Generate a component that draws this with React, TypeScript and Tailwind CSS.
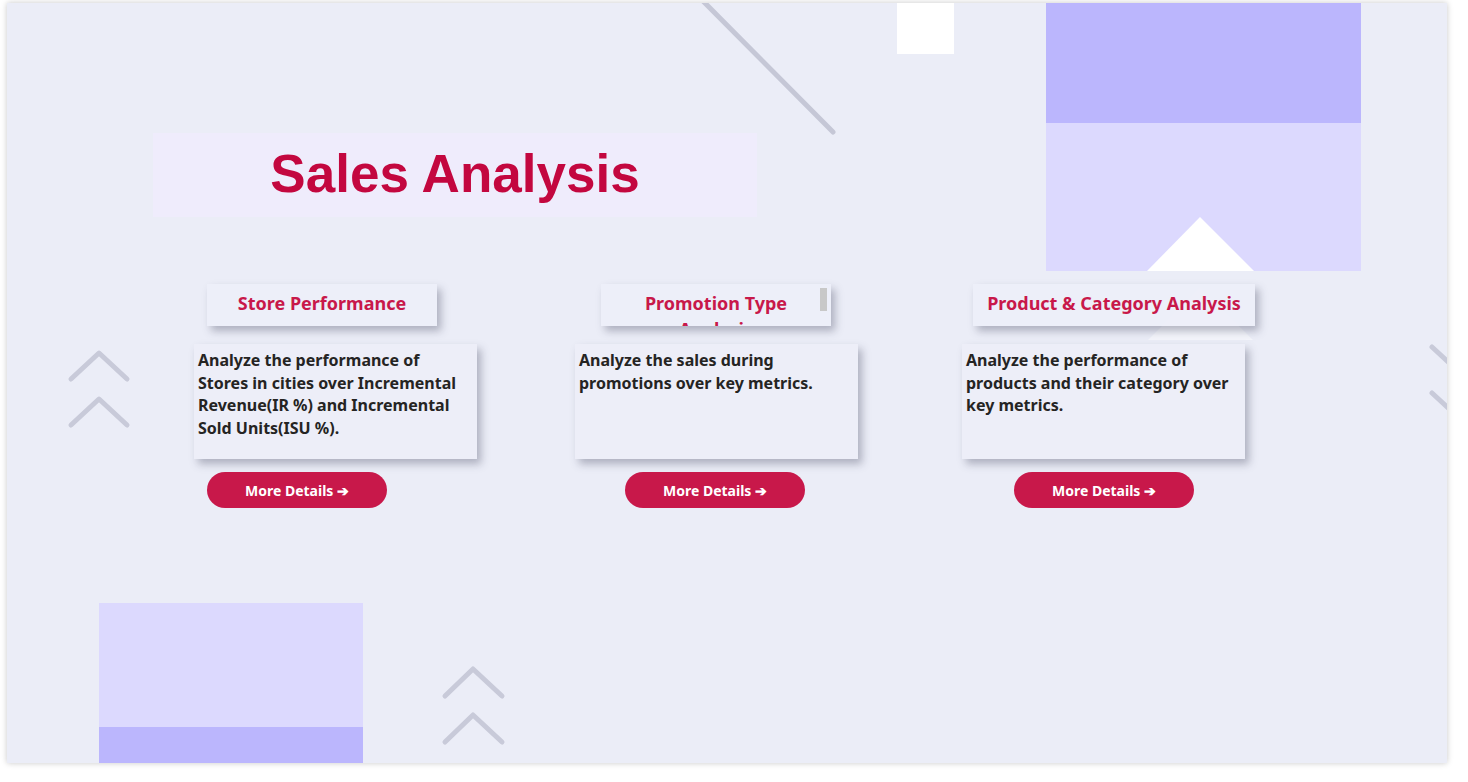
import React from "react";

const cards = [
  {
    title: "Store Performance",
    desc: "Analyze the performance of Stores in cities over Incremental Revenue(IR %) and Incremental Sold Units(ISU %).",
    colMl: "ml-[187px]",
    titleCls: "ml-[13px] w-[230px]",
    btnCls: "ml-[13px]",
    scroll: false,
  },
  {
    title: "Promotion Type Analysis",
    desc: "Analyze the sales during promotions over key metrics.",
    colMl: "ml-[98px]",
    titleCls: "ml-[26px] w-[230px]",
    btnCls: "ml-[50px]",
    scroll: true,
  },
  {
    title: "Product & Category Analysis",
    desc: "Analyze the performance of products and their category over key metrics.",
    colMl: "ml-[104px]",
    titleCls: "ml-[11px] w-[282px]",
    btnCls: "ml-[52px]",
    scroll: false,
  },
];

function Decorations() {
  const stroke = "#C8CAD9";
  return (
    <svg
      className="absolute inset-0 pointer-events-none"
      width={1440}
      height={760}
      viewBox="0 0 1440 760"
    >
      {/* purple block top right */}
      <rect x={1039} y={0} width={315} height={120} fill="#BBB6FD" />
      <rect x={1039} y={120} width={315} height={148} fill="#DCD9FE" />
      <polygon points="1193,214 1140,268 1247,268" fill="#FFFFFF" />
      <polygon points="1193,285 1141,337 1246,337" fill="#FFFFFF" fillOpacity={0.45} />
      {/* white square */}
      <rect x={890} y={0} width={57} height={51} fill="#FFFFFF" />
      {/* bottom left block */}
      <rect x={92} y={600} width={264} height={124} fill="#DCD9FE" />
      <rect x={92} y={724} width={264} height={36} fill="#BBB6FD" />
      {/* diagonal line */}
      <line x1={692} y1={-6} x2={826} y2={129} stroke="#C5C7D6" strokeWidth={5} strokeLinecap="round" />
      {/* chevrons left */}
      <polyline points="64,376 92,350 120,376" fill="none" stroke={stroke} strokeWidth={5} strokeLinecap="round" strokeLinejoin="round" />
      <polyline points="64,422 92,396 120,422" fill="none" stroke={stroke} strokeWidth={5} strokeLinecap="round" strokeLinejoin="round" />
      {/* chevrons bottom */}
      <polyline points="438,693 466,666 495,693" fill="none" stroke={stroke} strokeWidth={5} strokeLinecap="round" strokeLinejoin="round" />
      <polyline points="438,739 466,712 495,739" fill="none" stroke={stroke} strokeWidth={5} strokeLinecap="round" strokeLinejoin="round" />
      {/* chevrons right (clipped) */}
      <polyline points="1425,344 1453,370 1481,344" fill="none" stroke={stroke} strokeWidth={5} strokeLinecap="round" strokeLinejoin="round" />
      <polyline points="1425,390 1453,416 1481,390" fill="none" stroke={stroke} strokeWidth={5} strokeLinecap="round" strokeLinejoin="round" />
    </svg>
  );
}

export default function App() {
  return (
    <div className="w-[1468px] h-[782px] bg-white pl-[7px] pt-[3px] overflow-hidden">
      <div
        className="relative w-[1440px] h-[760px] bg-[#EBEDF7] overflow-hidden shadow-[0_0_6px_rgba(0,0,0,0.22)]"
        style={{ fontFamily: '"Noto Sans", "Open Sans", sans-serif' }}
      >
        <Decorations />
        <div className="relative flex flex-col">
          <div className="ml-[146px] mt-[130px] w-[604px] h-[84px] bg-[#EFECFC] flex items-center justify-center">
            <h1
              className="text-[53px] font-bold text-[#C3073F] leading-none mb-[3px]"
              style={{ fontFamily: '"Liberation Sans", Arial, sans-serif' }}
            >
              Sales Analysis
            </h1>
          </div>
          <div className="mt-[67px] flex items-start">
            {cards.map((c) => (
              <div key={c.title} className={`${c.colMl} flex flex-col`}>
                <div
                  className={`${c.titleCls} relative h-[42px] overflow-hidden bg-[#EDEEF8]/90 shadow-[4px_5px_8px_rgba(60,64,90,0.35)]`}
                >
                  <div className="px-[8px] pt-[6px] text-center text-[18px] leading-[26px] font-bold text-[#C8184A]">
                    {c.title}
                  </div>
                  {c.scroll && (
                    <div className="absolute right-[4px] top-[4px] w-[7px] h-[23px] bg-[#C8C8C8]" />
                  )}
                </div>
                <div className="mt-[18px] w-[283px] h-[115px] bg-[#EDEEF8] shadow-[4px_5px_8px_rgba(60,64,90,0.35)] px-[4px] pt-[5px]">
                  <p className="text-[16px] leading-[22.5px] font-bold text-[#252423]">
                    {c.desc}
                  </p>
                </div>
                <div className={`${c.btnCls} mt-[13px]`}>
                  <button className="w-[180px] h-[36px] rounded-full bg-[#C8184A] text-white text-[14px] font-bold flex items-center justify-center">
                    More Details ➔
                  </button>
                </div>
              </div>
            ))}
          </div>
        </div>
      </div>
    </div>
  );
}
